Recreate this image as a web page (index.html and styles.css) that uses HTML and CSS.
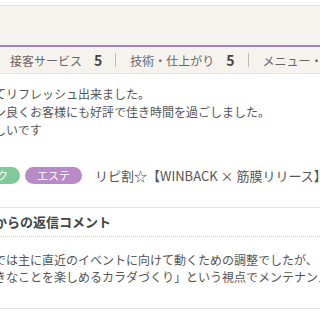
FILE: index.html
```html
<!DOCTYPE html>
<html lang="ja">
<head>
    <meta charset="UTF-8">
    <title>口コミ</title>
    <link rel="stylesheet" href="styles.css">
</head>
<body>
    <div class="review">
        <div class="review-head"></div>
        <div class="scores">
            <span class="label">接客サービス</span><span class="num">5</span><span class="sep"></span>
            <span class="label">技術・仕上がり</span><span class="num">5</span><span class="sep"></span>
            <span class="label">メニュー・料金</span><span class="num">5</span>
        </div>
        <div class="comment">
            <p>てリフレッシュ出来ました。</p>
            <p>ン良くお客様にも好評で佳き時間を過ごしました。</p>
            <p>しいです</p>
        </div>
        <div class="menu">
            <span class="tag green">リラク</span>
            <span class="tag purple">エステ</span>
            <span class="menu-name">リピ割☆【WINBACK × 筋膜リリース】80分</span>
        </div>
        <div class="reply">
            <h3>からの返信コメント</h3>
            <p>では主に直近のイベントに向けて動くための調整でしたが、</p>
            <p>きなことを楽しめるカラダづくり」という視点でメンテナンスを</p>
        </div>
    </div>
</body>
</html>
```
FILE: styles.css
```css
* {
    padding: 0;
    margin: 0;
}

body {
    background-color: #fff;
    font-family: "Noto Sans CJK JP", "Noto Sans", sans-serif;
    color: #555;
    overflow: hidden;
}

.review {
    margin-left: -6px;
    width: 380px;
    padding-top: 5px;
}

.review-head {
    height: 39px;
    border-top: 1px solid #e4e4e4;
    border-bottom: 2px solid #a27fd6;
    background-color: #f6f3ee;
}

.scores {
    display: flex;
    align-items: center;
    height: 26px;
    padding-left: 16px;
    background-color: #f6f3ee;
    border-bottom: 1px solid #e4e4e4;
    font-size: 12px;
    color: #666;
    white-space: nowrap;
}

.num {
    margin-left: 12px;
    font-size: 14px;
    font-weight: 700;
    color: #444;
}

.sep {
    width: 1px;
    height: 14px;
    margin: 0 14px 0 13px;
    background-color: #bbb;
}

.comment {
    padding-top: 11px;
    font-size: 12px;
    line-height: 18px;
    white-space: nowrap;
}

.menu {
    display: flex;
    align-items: center;
    gap: 5px;
    margin-top: 27px;
    margin-left: -31px;
    white-space: nowrap;
}

.tag {
    height: 17px;
    padding: 0 12px;
    border-radius: 9px;
    font-size: 11px;
    line-height: 17px;
    color: #fff;
}

.green {
    background-color: #7fc99b;
}

.purple {
    background-color: #b98ac8;
}

.menu-name {
    margin-left: 8px;
    font-size: 13px;
    color: #555;
}

.reply {
    margin-top: 22px;
    border-top: 1px solid #e4e4e4;
    border-bottom: 1px solid #e4e4e4;
    padding-bottom: 23px;
    white-space: nowrap;
}

.reply h3 {
    height: 28px;
    margin-bottom: 14px;
    border-bottom: 1px dotted #ccc;
    font-size: 13px;
    line-height: 28px;
    color: #444;
}

.reply p {
    font-size: 12px;
    line-height: 17px;
}
```
